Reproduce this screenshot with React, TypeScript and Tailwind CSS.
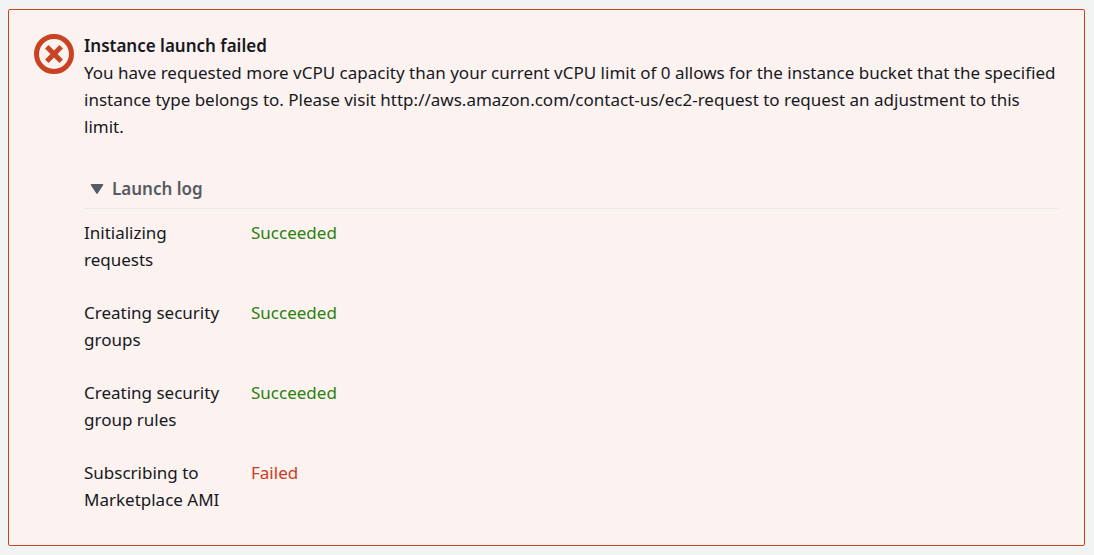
import { useState } from "react";

type Step = { name: string; status: "Succeeded" | "Failed" };

const steps: Step[] = [
  { name: "Initializing requests", status: "Succeeded" },
  { name: "Creating security groups", status: "Succeeded" },
  { name: "Creating security group rules", status: "Succeeded" },
  { name: "Subscribing to Marketplace AMI", status: "Failed" },
];

function ErrorIcon() {
  return (
    <svg viewBox="0 0 40 40" className="mt-0.5 size-10 shrink-0" fill="none" stroke="#c94323" strokeWidth="5" aria-hidden="true">
      <circle cx="20" cy="20" r="17.5" />
      <path d="M12.8 12.8 27.2 27.2M27.2 12.8 12.8 27.2" />
    </svg>
  );
}

function LaunchLog() {
  const [open, setOpen] = useState(true);
  return (
    <section className="mt-[35px]">
      <button
        type="button"
        aria-expanded={open}
        onClick={() => setOpen(!open)}
        className="flex w-full items-center gap-2 border-b border-[#e8eced] pb-1.5 pl-1.5 text-left font-semibold text-[#545b64]"
      >
        <svg viewBox="0 0 14 12" className={open ? "h-3 w-3.5" : "h-3 w-3.5 -rotate-90"} aria-hidden="true">
          <path d="M1.5 1.8h11L7 10.200Z" fill="#545b64" stroke="#545b64" strokeWidth="1.5" strokeLinejoin="round" />
        </svg>
        Launch log
      </button>
      {open && (
        <table className="mt-2.5 w-full text-left">
          <tbody>
            {steps.map((step) => (
              <tr key={step.name} className="align-top">
                <th scope="row" className="w-[167px] pb-[26px] pr-5 font-normal">
                  {step.name}
                </th>
                <td className={step.status === "Failed" ? "text-[#cf3a1c]" : "text-[#2b8010]"}>{step.status}</td>
              </tr>
            ))}
          </tbody>
        </table>
      )}
    </section>
  );
}

export default function App() {
  return (
    <main className="min-h-screen bg-[#f2f3f3] py-[9px] pl-2 pr-[9px] font-['Noto_Sans',sans-serif] text-[17px] leading-[27px] text-[#16191f]">
      <div role="alert" className="flex gap-2.5 rounded-xs border border-[#c94323] bg-[#fcf2ef] px-[25px] pb-1.5 pt-[22px]">
        <ErrorIcon />
        <div className="min-w-0 flex-1">
          <h1 className="font-semibold">Instance launch failed</h1>
          <p>
            You have requested more vCPU capacity than your current vCPU limit of 0 allows for the instance bucket that
            the specified instance type belongs to. Please visit http://aws.amazon.com/contact-us/ec2-request to request
            an adjustment to this limit.
          </p>
          <LaunchLog />
        </div>
      </div>
    </main>
  );
}
